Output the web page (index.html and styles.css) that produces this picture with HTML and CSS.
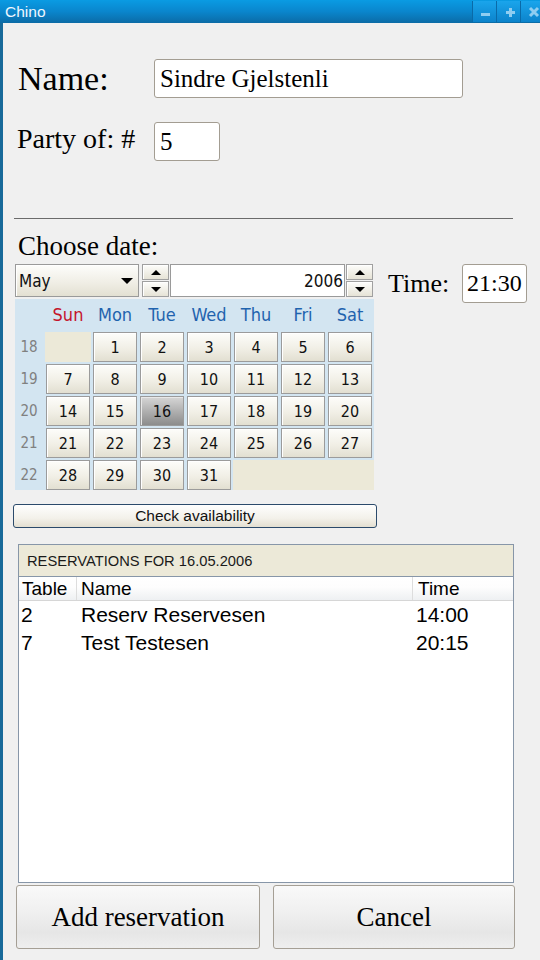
FILE: index.html
```html
<!DOCTYPE html>
<html>
<head>
<meta charset="utf-8">
<link rel="stylesheet" href="styles.css">
</head>
<body>
<div class="titlebar">
  <span class="title">Chino</span>
  <div class="tb-buttons">
    <span class="tb-btn"><svg width="23" height="21" viewBox="0 0 23 21"><rect x="8" y="12" width="9" height="3" fill="#8fcdf1"/></svg></span>
    <span class="tb-btn"><svg width="23" height="21" viewBox="0 0 23 21"><rect x="9" y="10" width="9" height="3" fill="#8fcdf1"/><rect x="12" y="7" width="3" height="9" fill="#8fcdf1"/></svg></span>
    <span class="tb-btn"><svg width="23" height="21" viewBox="0 0 23 21"><path d="M9 7 L17 15 M17 7 L9 15" stroke="#8fcdf1" stroke-width="3" fill="none"/></svg></span>
  </div>
</div>
<div class="window">
  <div class="frame-left"></div>
  <div class="content">
    <div class="row name-row">
      <span class="lbl-name">Name:</span>
      <div class="textbox name-field">Sindre Gjelstenli</div>
    </div>
    <div class="row party-row">
      <span class="lbl-party">Party of: #</span>
      <div class="textbox party-field">5</div>
    </div>
    <div class="divider"></div>
    <div class="choose">Choose date:</div>
    <div class="date-row">
      <div class="calendar">
        <div class="controls">
          <div class="combo"><span>May</span><span class="drop"></span></div>
          <div class="spin"><span class="spin-btn"><span class="up"></span></span><span class="spin-btn"><span class="down"></span></span></div>
          <div class="year">2006</div>
          <div class="spin"><span class="spin-btn"><span class="up"></span></span><span class="spin-btn"><span class="down"></span></span></div>
        </div>
        <div class="cal">
          <span class="corner"></span>
          <span class="dn sun">Sun</span><span class="dn">Mon</span><span class="dn">Tue</span><span class="dn">Wed</span><span class="dn">Thu</span><span class="dn">Fri</span><span class="dn">Sat</span>
          <span class="wk">18</span><span class="empty"></span>
          <span class="day">1</span><span class="day">2</span><span class="day">3</span><span class="day">4</span><span class="day">5</span><span class="day">6</span>
          <span class="wk">19</span>
          <span class="day">7</span><span class="day">8</span><span class="day">9</span><span class="day">10</span><span class="day">11</span><span class="day">12</span><span class="day">13</span>
          <span class="wk">20</span>
          <span class="day">14</span><span class="day">15</span><span class="day sel">16</span><span class="day">17</span><span class="day">18</span><span class="day">19</span><span class="day">20</span>
          <span class="wk">21</span>
          <span class="day">21</span><span class="day">22</span><span class="day">23</span><span class="day">24</span><span class="day">25</span><span class="day">26</span><span class="day">27</span>
          <span class="wk">22</span>
          <span class="day">28</span><span class="day">29</span><span class="day">30</span><span class="day">31</span><span class="empty-end"></span>
        </div>
      </div>
      <div class="time">
        <span class="lbl-time">Time:</span>
        <div class="textbox time-field">21:30</div>
      </div>
    </div>
    <div class="check">Check availability</div>
    <div class="panel">
      <div class="panel-head">RESERVATIONS FOR 16.05.2006</div>
      <div class="thead">
        <span class="c1">Table</span><span class="c2">Name</span><span class="c3">Time</span>
      </div>
      <div class="tr"><span class="c1">2</span><span class="c2">Reserv Reservesen</span><span class="c3">14:00</span></div>
      <div class="tr"><span class="c1">7</span><span class="c2">Test Testesen</span><span class="c3">20:15</span></div>
    </div>
    <div class="actions">
      <div class="btn add">Add reservation</div>
      <div class="btn cancel">Cancel</div>
    </div>
  </div>
</div>
</body>
</html>
```
FILE: styles.css
```css
body {
  margin: 0;
  width: 540px;
  height: 960px;
  overflow: hidden;
  background: #f0f0f0;
  font-family: "Liberation Serif", serif;
  color: #000;
}

.titlebar {
  height: 23px;
  display: flex;
  justify-content: space-between;
  background: linear-gradient(#0a9be3, #0a86cd 50%, #0b6ba6);
  overflow: hidden;
}
.title {
  color: #eef7ff;
  font: 15.5px "Liberation Sans", sans-serif;
  line-height: 23px;
  padding-left: 5px;
}
.tb-buttons {
  display: flex;
  margin-right: -4px;
  padding: 1px 0;
}
.tb-btn {
  box-sizing: border-box;
  width: 24px;
  height: 21px;
  border-left: 1px solid #0a6aa8;
  background: linear-gradient(#1aa5ec, #0c83cb);
  display: flex;
}

.window {
  display: flex;
  height: 937px;
}
.frame-left {
  width: 3px;
  background: #186a9a;
}
.content {
  flex: 1;
}

.row {
  display: flex;
  align-items: center;
}
.name-row {
  margin-top: 36px;
  padding-left: 15px;
}
.lbl-name {
  width: 136px;
  font-size: 34px;
}
.textbox {
  box-sizing: border-box;
  height: 39px;
  background: #fff;
  border: 1px solid #a39d92;
  border-radius: 3px;
  padding-left: 5px;
  font-size: 25px;
  display: flex;
  align-items: center;
}
.name-field {
  width: 309px;
}
.party-row {
  margin-top: 24px;
  padding-left: 14px;
}
.lbl-party {
  width: 137px;
  font-size: 28px;
  margin-bottom: 6px;
}
.party-field {
  width: 66px;
}

.divider {
  margin: 57px 0 0 11px;
  width: 499px;
  height: 1px;
  background: #6b6b6b;
}

.choose {
  margin-top: 12px;
  padding-left: 15px;
  font-size: 27px;
  line-height: 30px;
}

.date-row {
  display: flex;
  margin-top: 3px;
  padding-left: 12px;
}
.calendar {
  width: 359px;
}
.controls {
  display: flex;
  height: 33px;
  font-family: "DejaVu Sans Condensed", "DejaVu Sans", sans-serif;
  font-stretch: condensed;
  font-size: 17px;
}
.combo {
  box-sizing: border-box;
  width: 124px;
  border: 1px solid #9a9a9a;
  background: linear-gradient(#fdfdfb, #efede4 60%, #e3e0d2);
  box-shadow: inset 1px 1px 0 #fff;
  display: flex;
  align-items: center;
  justify-content: space-between;
  padding: 0 5px 0 3px;
  color: #111;
}
.drop {
  width: 0;
  height: 0;
  border-left: 6px solid transparent;
  border-right: 6px solid transparent;
  border-top: 6px solid #000;
}
.spin {
  box-sizing: border-box;
  width: 27px;
  margin-left: 3px;
  display: flex;
  flex-direction: column;
  gap: 1px;
}
.spin-btn {
  flex: 1;
  border: 1px solid #a0a0a0;
  background: linear-gradient(#fdfdfb, #e6e3d6);
  box-shadow: inset 1px 1px 0 #fff;
  display: flex;
  align-items: center;
  justify-content: center;
}
.up {
  width: 0;
  height: 0;
  border-left: 5px solid transparent;
  border-right: 5px solid transparent;
  border-bottom: 5px solid #000;
}
.down {
  width: 0;
  height: 0;
  border-left: 5px solid transparent;
  border-right: 5px solid transparent;
  border-top: 5px solid #000;
}
.year {
  box-sizing: border-box;
  width: 175px;
  margin-left: 1px;
  border: 1px solid #9a9a9a;
  background: #fff;
  display: flex;
  align-items: center;
  justify-content: flex-end;
  padding-right: 1px;
  color: #111;
}
.year + .spin {
  margin-left: 1px;
}

.cal {
  margin-top: 2px;
  background: #d3e5f1;
  display: grid;
  grid-template-columns: 28px repeat(7, 44px);
  grid-template-rows: 31px repeat(5, 30px);
  column-gap: 3px;
  row-gap: 2px;
  padding-right: 2px;
  font-family: "DejaVu Sans Condensed", "DejaVu Sans", sans-serif;
  font-stretch: condensed;
}
.dn {
  display: flex;
  align-items: center;
  justify-content: center;
  font-size: 18px;
  color: #1f63ae;
}
.dn.sun {
  color: #c4142b;
}
.wk {
  display: flex;
  align-items: center;
  justify-content: center;
  font-size: 15px;
  color: #808080;
}
.day {
  box-sizing: border-box;
  border: 1px solid #9b9b9b;
  background: linear-gradient(#fdfdfa, #f1efe6 55%, #e2dfd1);
  box-shadow: inset 1px 1px 0 #fff;
  display: flex;
  align-items: center;
  justify-content: center;
  font-size: 16px;
  color: #111;
}
.day.sel {
  background: linear-gradient(#d6d6d6, #a9a9a9 60%, #8c8c8c);
  box-shadow: inset 1px 1px 0 #e8e8e8;
}
.empty {
  background: #ece9d8;
  margin: 0 -1px;
}
.empty-end {
  grid-column: span 3;
  background: #ece9d8;
  margin: 0 -2px 0 -1px;
}

.time {
  display: flex;
  align-items: center;
  height: 39px;
  margin-left: 14px;
}
.lbl-time {
  width: 74px;
  font-size: 26px;
}
.time-field {
  width: 65px;
  padding-left: 4px;
  font-size: 24px;
}

.check {
  box-sizing: border-box;
  margin: 14px 0 0 10px;
  width: 364px;
  height: 24px;
  border: 1px solid #2b4a6b;
  border-radius: 3px;
  background: linear-gradient(#fefefe, #f3f1ea 60%, #e3dfd1);
  display: flex;
  align-items: center;
  justify-content: center;
  font: 15.5px "Liberation Sans", sans-serif;
  color: #111;
}

.panel {
  box-sizing: border-box;
  margin: 16px 0 0 15px;
  width: 496px;
  height: 339px;
  border: 1px solid #8796a8;
  background: #fff;
  font-family: "Liberation Sans", sans-serif;
}
.panel-head {
  height: 31px;
  background: #ece9d8;
  border-bottom: 1px solid #8796a8;
  padding-left: 8px;
  display: flex;
  align-items: center;
  font-size: 14.7px;
  color: #1a1a1a;
}
.thead,
.tr {
  display: grid;
  grid-template-columns: 58px 336px 1fr;
}
.thead {
  height: 23px;
  line-height: 23px;
  font-size: 19px;
  background: linear-gradient(#ffffff, #fdfdfd 45%, #eef0f2);
  border-bottom: 1px solid #d6d6d6;
}
.thead .c1,
.thead .c2 {
  border-right: 1px solid #dddddd;
}
.thead .c1 {
  padding-left: 3px;
}
.thead .c2 {
  padding-left: 4px;
}
.thead .c3 {
  padding-left: 5px;
}
.tr {
  height: 28px;
  line-height: 28px;
  font-size: 21px;
}
.tr .c1 {
  padding-left: 2px;
}
.tr .c2 {
  padding-left: 4px;
}
.tr .c3 {
  padding-left: 3px;
}

.actions {
  display: flex;
  gap: 13px;
  margin: 2px 0 0 13px;
}
.btn {
  box-sizing: border-box;
  height: 64px;
  border: 1px solid #a59f95;
  border-radius: 3px;
  background: linear-gradient(#f9f9f9, #efefef 45%, #e6e6e6 75%, #eeeeee);
  display: flex;
  align-items: center;
  justify-content: center;
  font-size: 27px;
}
.add {
  width: 244px;
}
.cancel {
  width: 242px;
}
```
